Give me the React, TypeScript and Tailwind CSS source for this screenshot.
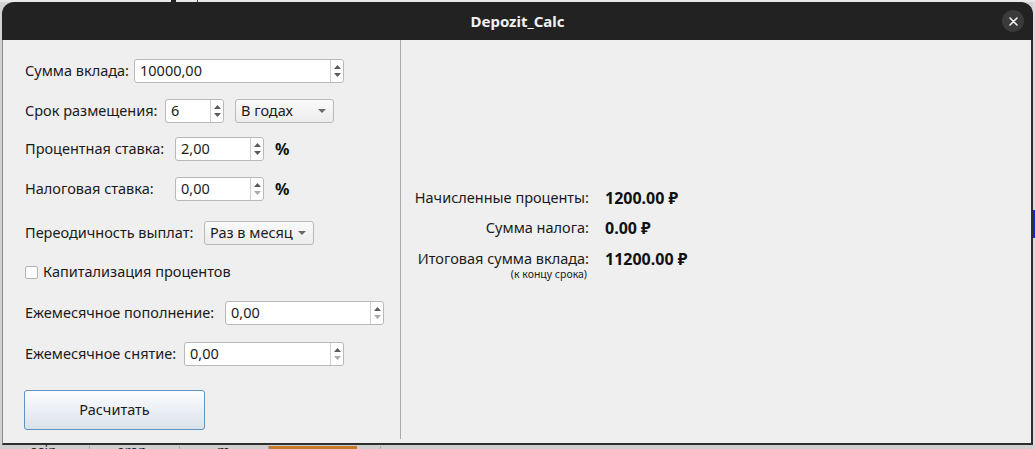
import React from "react";

const font = { fontFamily: '"Noto Sans", "Open Sans", sans-serif' };

const Arrow = ({ dir, light }: { dir: "up" | "down"; light?: boolean }) => (
  <svg width="7" height="4" viewBox="0 0 7 4" className="block">
    <path
      d={dir === "up" ? "M0 4 L3.5 0 L7 4 Z" : "M0 0 L3.5 4 L7 0 Z"}
      fill={light ? "#a9a9a9" : "#5a5a5a"}
    />
  </svg>
);

const SpinBox = ({
  value,
  width,
  atMin,
}: {
  value: string;
  width: string;
  atMin?: boolean;
}) => (
  <div
    className={`${width} h-[24px] flex bg-white border border-[#b9b9b9] rounded-[3px]`}
  >
    <div className="flex-1 flex items-center pl-[5px] text-[14.5px] text-[#1b1b1b]">
      {value}
    </div>
    <div className="w-[13px] border-l border-[#d0d0d0] flex flex-col items-center justify-center gap-[4px]">
      <Arrow dir="up" />
      <Arrow dir="down" light={atMin} />
    </div>
  </div>
);

const Combo = ({ value, width }: { value: string; width: string }) => (
  <div
    className={`${width} h-[24px] flex items-center justify-between pl-[5px] pr-[7px] border border-[#b9b9b9] rounded-[3px] bg-gradient-to-b from-[#fafafa] to-[#ececec] text-[14.5px] text-[#1b1b1b]`}
  >
    <span>{value}</span>
    <svg width="8" height="4" viewBox="0 0 8 4">
      <path d="M0 0 L4 4 L8 0 Z" fill="#6a6a6a" />
    </svg>
  </div>
);

const Row = ({
  label,
  labelW,
  mt,
  children,
}: {
  label: string;
  labelW: string;
  mt: string;
  children: React.ReactNode;
}) => (
  <div className={`${mt} h-[24px] flex items-center`}>
    <span className={`${labelW} shrink-0 text-[14.5px] text-[#1b1b1b]`}>
      {label}
    </span>
    {children}
  </div>
);

const Result = ({
  label,
  value,
  mt,
}: {
  label: string;
  value: string;
  mt: string;
}) => (
  <div className={`${mt} h-[20px] flex items-center`}>
    <span className="w-[188px] text-right text-[14.5px] text-[#1b1b1b] whitespace-nowrap">
      {label}
    </span>
    <span className="ml-[16px] text-[16px] font-bold text-[#111]">{value}</span>
  </div>
);

export default function App() {
  return (
    <div
      className="w-[1035px] h-[449px] bg-[#d2d2d2] overflow-hidden flex flex-col"
      style={font}
    >
      <div className="h-[2px] flex shrink-0 bg-[#e9e9e9]">
        <div className="ml-[171px] w-[5px] bg-[#222]" />
        <div className="ml-[21px] w-px bg-[#444]" />
      </div>
      <div className="flex shrink-0">
        {/* window */}
        <div className="ml-[2px] w-[1031px] h-[443px] flex flex-col">
          <div className="h-[38px] shrink-0 rounded-t-[12px] bg-[#222222] flex items-center justify-center relative">
            <span className="text-[15px] font-bold text-[#f2f2f2]">
              Depozit_Calc
            </span>
            <div className="absolute right-[9px] top-[8px] w-[22px] h-[22px] rounded-full bg-[#3a3a3a] flex items-center justify-center">
              <svg width="9" height="9" viewBox="0 0 9 9">
                <path
                  d="M1 1 L8 8 M8 1 L1 8"
                  stroke="#f2f2f2"
                  strokeWidth="1.6"
                  strokeLinecap="round"
                />
              </svg>
            </div>
          </div>
          <div className="flex-1 flex bg-[#efefef] border-l border-l-[#8a8a8a] border-r-2 border-r-[#2e2e2e] border-b-2 border-b-[#2e2e2e]">
            {/* left panel */}
            <div className="w-[397px] shrink-0 flex flex-col pl-[22px]">
              <Row label="Сумма вклада:" labelW="w-[109px]" mt="mt-[19px]">
                <SpinBox value="10000,00" width="w-[210px]" />
              </Row>
              <Row label="Срок размещения:" labelW="w-[140px]" mt="mt-[16px]">
                <SpinBox value="6" width="w-[59px]" />
                <div className="ml-[11px]">
                  <Combo value="В годах" width="w-[99px]" />
                </div>
              </Row>
              <Row label="Процентная ставка:" labelW="w-[150px]" mt="mt-[14px]">
                <SpinBox value="2,00" width="w-[89px]" />
                <span className="ml-[11px] text-[16px] font-bold text-[#111]">
                  %
                </span>
              </Row>
              <Row label="Налоговая ставка:" labelW="w-[150px]" mt="mt-[16px]">
                <SpinBox value="0,00" width="w-[89px]" atMin />
                <span className="ml-[11px] text-[16px] font-bold text-[#111]">
                  %
                </span>
              </Row>
              <Row
                label="Переодичность выплат:"
                labelW="w-[179px]"
                mt="mt-[20px]"
              >
                <Combo value="Раз в месяц" width="w-[110px]" />
              </Row>
              <div className="mt-[15px] h-[24px] flex items-center">
                <div className="w-[13px] h-[13px] bg-white border border-[#b3b3b3] rounded-[2px]" />
                <span className="ml-[5px] text-[14.5px] text-[#1b1b1b]">
                  Капитализация процентов
                </span>
              </div>
              <Row
                label="Ежемесячное пополнение:"
                labelW="w-[200px]"
                mt="mt-[17px]"
              >
                <SpinBox value="0,00" width="w-[159px]" atMin />
              </Row>
              <Row label="Ежемесячное снятие:" labelW="w-[159px]" mt="mt-[17px]">
                <SpinBox value="0,00" width="w-[160px]" atMin />
              </Row>
              <button className="mt-[24px] -ml-px w-[181px] h-[40px] rounded-[3px] border border-[#5f93c2] bg-gradient-to-b from-[#fdfdfe] to-[#d9e2ea] text-[14.5px] text-[#1b1b1b]">
                Расчитать
              </button>
            </div>
            <div className="w-px bg-[#a9a9a9] mb-[4px]" />
            {/* right panel */}
            <div className="flex-1 flex flex-col">
              <Result
                label="Начисленные проценты:"
                value="1200.00 ₽"
                mt="mt-[148px]"
              />
              <Result label="Сумма налога:" value="0.00 ₽" mt="mt-[10px]" />
              <Result
                label="Итоговая сумма вклада:"
                value="11200.00 ₽"
                mt="mt-[11px]"
              />
              <div className="w-[186px] mt-[-1px] text-right text-[10.5px] leading-[12px] text-[#1b1b1b]">
                (к концу срока)
              </div>
            </div>
          </div>
        </div>
        <div className="flex-1 flex flex-col bg-[#dcdcdc]">
          <div className="mt-[208px] h-[28px] w-[2px] bg-[#1a22d8]" />
        </div>
      </div>
      <div className="flex-1 flex bg-[#cfcfcf] text-[14px] text-[#222] leading-[10px] pt-[1px] overflow-hidden">
        <div className="w-[90px] pl-[30px] border-r border-[#aaa]">asin</div>
        <div className="w-[90px] pl-[27px] border-r border-[#aaa]">aran</div>
        <div className="w-[89px] pl-[37px] border-r border-[#aaa]">m</div>
        <div className="w-[88px] bg-[#c77a2b]" />
        <div className="w-[24px] border-r border-[#aaa]" />
      </div>
    </div>
  );
}
